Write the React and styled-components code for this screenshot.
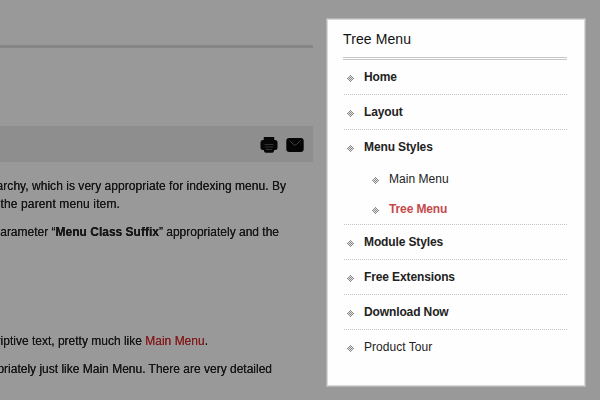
import React from "react";
import styled, { createGlobalStyle } from "styled-components";

const GlobalStyle = createGlobalStyle`
  * { box-sizing: border-box; }
  body { margin: 0; background: #999; overflow: hidden; }
`;

const Page = styled.div`
  display: flex;
  width: 600px;
  height: 400px;
  overflow: hidden;
  background: #999;
  font: 12px/18px "Liberation Sans", Arial, sans-serif;
`;

const Article = styled.main`
  flex: 0 0 313px;
  height: 400px;
  padding-top: 45px;
  overflow: hidden;
  color: #161616;
  filter: blur(0.5px);
`;

const Rule = styled.hr`
  height: 3px;
  margin: 0 0 78px;
  border: 0;
  background: #868686;
`;

const Toolbar = styled.div`
  display: flex;
  justify-content: flex-end;
  align-items: center;
  gap: 8px;
  height: 36px;
  margin-bottom: 15px;
  padding: 2px 9px 0 0;
  background: #8e8e8e;
`;

const Line = styled.p`
  display: flex;
  justify-content: flex-end;
  width: ${(p) => p.$end}px;
  height: 18px;
  margin: 0 0 ${(p) => p.$gap || 0}px;
  white-space: pre;
  letter-spacing: ${(p) => p.$track || 0}px;
  text-shadow: 0 0 0.6px currentColor;
`;

const ArticleLink = styled.a`
  color: #851a1c;
`;

const Panel = styled.aside`
  width: 260px;
  height: 369px;
  margin: 18px 0 0 13px;
  padding: 10px 18px 0 16px;
  border: 1px solid #b5b5b5;
  border-radius: 1px;
  box-shadow: inset 0 0 0 1px #d9d9d9;
  background: #fefefe;
  color: #222;
`;

const Title = styled.h3`
  height: 31px;
  margin: 0;
  border-bottom: 3px double #c6c6c6;
  font-size: 14px;
  font-weight: 400;
  line-height: 20px;
  letter-spacing: 0.1px;
  color: #111;
`;

const List = styled.ul`
  margin: 0;
  padding: 0;
  list-style: none;
`;

const Item = styled.li`
  padding-left: 1px;
`;

const Divider = styled.li`
  height: 1px;
  margin-left: 1px;
  background: repeating-linear-gradient(90deg, #c4c4c4 0 1px, transparent 1px 2px);
`;

const Entry = styled.a`
  display: flex;
  align-items: center;
  gap: 10px;
  height: ${(p) => (p.$nested ? 30 : 34)}px;
  padding-left: ${(p) => (p.$nested ? 28 : 3)}px;
  font-weight: ${(p) => (p.$strong ? 700 : 400)};
  letter-spacing: ${(p) => (p.$strong ? -0.12 : 0.04)}px;
  color: ${(p) => (p.$active ? "#c5494b" : "#222")};

  svg { margin-top: 3px; }
`;

const dots = [];
for (let y = 0; y < 7; y++)
  for (let x = 0; x < 7; x++)
    if (Math.abs(x - 3) + Math.abs(y - 3) <= 3 && (x + y) % 2 === 1) dots.push([x, y]);

const Bullet = () => (
  <svg width="7" height="7" shapeRendering="crispEdges" fill="#8c8c8c">
    <path d="M3 0h1v1h1v1h1v1h1v1H6v1H5v1H4v1H3V6H2V5H1V4H0V3h1V2h1V1h1z" fill="#dedede" />
    {dots.map(([x, y]) => <rect key={`${x}-${y}`} x={x} y={y} width="1" height="1" />)}
  </svg>
);

const Printer = () => (
  <svg width="18" height="16" viewBox="0 0 18 16">
    <path d="M4.5 0h9q.8 0 .8.8V3h.7q2.5 0 2.5 2.5v5q0 2.5-2.5 2.5h-.8q-.2 2.7-1.7 2.7h-7Q4 15.700 3.800 13H3Q.5 13 .5 10.500v-5Q.5 3 3 3h.7V.8Q3.700 0 4.500 0z" fill="#070707" />
    <path d="M4.500 7.500h9M5 10h8M6 12.500h6" stroke="#333" strokeWidth="1" />
  </svg>
);

const Envelope = () => (
  <svg width="18" height="14" viewBox="0 0 18 14">
    <rect x=".3" width="17.400" height="14" rx="3" fill="#050505" />
    <path d="M3.5 2.5L7.5 6.5Q9 8 10.5 6.5L14.5 2.5" fill="none" stroke="#404040" />
  </svg>
);

const items = [
  { label: "Home", strong: true },
  { label: "Layout", strong: true },
  { label: "Menu Styles", strong: true, children: [{ label: "Main Menu" }, { label: "Tree Menu", strong: true, active: true }] },
  { label: "Module Styles", strong: true },
  { label: "Free Extensions", strong: true },
  { label: "Download Now", strong: true },
  { label: "Product Tour" },
];

const MenuEntry = ({ item, nested }) => (
  <Entry $nested={nested} $strong={item.strong} $active={item.active}>
    <Bullet />
    <span>{item.label}</span>
  </Entry>
);

export default function App() {
  return (
    <Page>
      <GlobalStyle />
      <Article>
        <Rule />
        <Toolbar><Printer /><Envelope /></Toolbar>
        <Line $end={286} $track={0.04}>archy, which is very appropriate for indexing menu. By</Line>
        <Line $end={120} $gap={10} $track={0.13}>the parent menu item.</Line>
        <Line $end={279} $gap={91}>arameter “<b>Menu Class Suffix</b>” appropriately and the</Line>
        <Line $end={208} $gap={10}>riptive text, pretty much like <ArticleLink>Main Menu</ArticleLink>.</Line>
        <Line $end={272}>oriately just like Main Menu. There are very detailed</Line>
      </Article>
      <Panel>
        <Title>Tree Menu</Title>
        <List>
          {items.map((item, i) => (
            <React.Fragment key={item.label}>
              {i > 0 && <Divider />}
              <Item>
                <MenuEntry item={item} />
                {item.children && (
                  <List>
                    {item.children.map((child) => (
                      <li key={child.label}><MenuEntry item={child} nested /></li>
                    ))}
                  </List>
                )}
              </Item>
            </React.Fragment>
          ))}
        </List>
      </Panel>
    </Page>
  );
}
